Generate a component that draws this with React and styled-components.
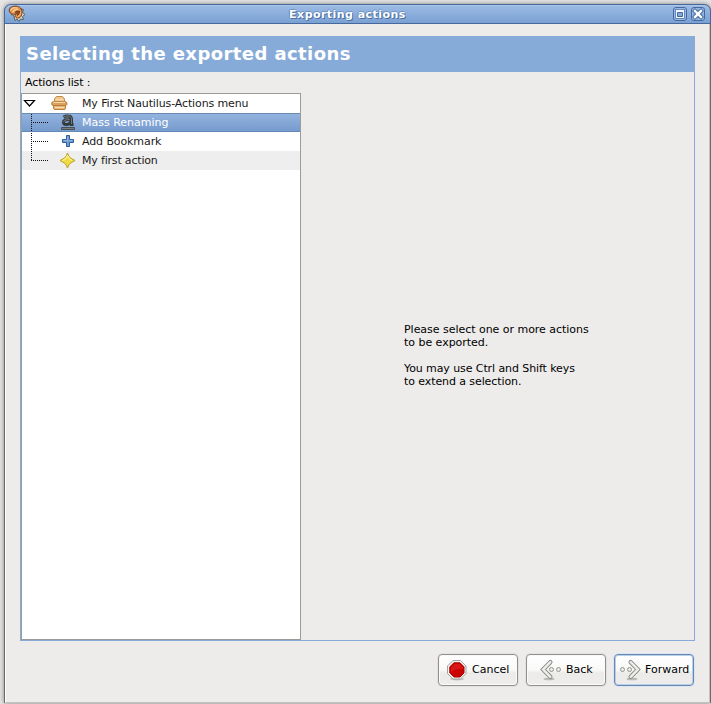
import React from "react";
import styled, { createGlobalStyle } from "styled-components";

const Global = createGlobalStyle`
  * { box-sizing: border-box; }
  body { margin: 0; overflow: hidden; background: #fff; }
`;

const Desktop = styled.div`
  width: 711px;
  height: 704px;
  padding: 4px 0 1px 4px;
  overflow: hidden;
  background: #e6e6e6;
  font: 11px/13px "DejaVu Sans", sans-serif;
  color: #000;
`;
const Window = styled.div`
  width: 707px;
  height: 699px;
  display: flex;
  flex-direction: column;
  border: 1px solid #6c6a68;
  border-top: 0;
  border-radius: 7px 7px 0 0;
  background: #edeceb;
  box-shadow: 0 0 5px rgba(0, 0, 0, 0.45);
`;
const TitleBar = styled.header`
  height: 20px;
  margin: 0 -1px;
  padding: 0 5px 0 3px;
  display: grid;
  grid-template-columns: 18px 1fr 32px;
  align-items: center;
  border: 1px solid #46689a;
  border-radius: 7px 7px 0 0;
  background: linear-gradient(#9dbce5, #7aa0d3);
  box-shadow: inset 0 1px #a9c5ea;
`;
const Title = styled.h1`
  margin: 0;
  padding: 1px 4px 0 0;
  text-align: center;
  font-size: 11px;
  line-height: 17px;
  letter-spacing: 0.46px;
  color: #fff;
  text-shadow: 1px 1px #49709f, -1px 0 #5f87bb, 0 -1px #6d94c7;
`;
const WindowControls = styled.div`
  display: flex;
  gap: 4px;
  svg { display: block; }
`;
const Body = styled.main`
  flex: 1;
  display: flex;
  flex-direction: column;
  padding: 12px 14px 16px 14px;
  border-left: 1px solid #fff;
  border-right: 1px solid #c5c2bf;
  border-bottom: 1px solid #c5c2bf;
`;
const Page = styled.section`
  height: 605px;
  display: flex;
  flex-direction: column;
  border: 1px solid #86abd9;
  border-top: 0;
`;
const Banner = styled.h2`
  height: 36px;
  margin: 0 -1px;
  padding-left: 6px;
  background: #86abd9;
  color: #fff;
  font-size: 18px;
  line-height: 35px;
  letter-spacing: 0.42px;
  white-space: nowrap;
`;
const Columns = styled.div`
  flex: 1;
  display: grid;
  grid-template-columns: 280px 1fr;
`;
const ListColumn = styled.div`
  display: flex;
  flex-direction: column;
`;
const ListLabel = styled.div`
  height: 21px;
  padding-left: 4px;
  line-height: 21px;
  letter-spacing: -0.12px;
`;
const Tree = styled.div`
  flex: 1;
  border: 1px solid #9d9b98;
  background: #fff;
`;
const Row = styled.div`
  height: 19px;
  display: grid;
  grid-template-columns: 60px 1fr;
  line-height: 19px;
  letter-spacing: ${(p) => p.$tracking || 0}px;
  white-space: nowrap;
  color: ${(p) => (p.$selected ? "#fff" : "#1a1a1a")};
  background: ${(p) =>
    p.$selected ? "linear-gradient(#95b5e0, #7499cc)" : p.$shaded ? "#eeeeee" : "#fff"};
  box-shadow: ${(p) => (p.$selected ? "inset 0 1px #6b8cb2, inset 0 -1px #6488b9" : "none")};
`;
const Gutter = styled.svg`
  display: block;
  width: 60px;
  height: 19px;
`;
const Message = styled.div`
  padding: 251px 0 0 103px;
  letter-spacing: -0.03px;
  white-space: nowrap;
  p { margin: 0 0 13px; }
  p + p { letter-spacing: -0.09px; }
`;
const Actions = styled.footer`
  margin: 13px 1px 0 0;
  display: flex;
  justify-content: flex-end;
  gap: 8px;
`;
const Button = styled.button`
  width: 80px;
  height: 32px;
  padding: 0 0 1px ${(p) => p.$inset || 0}px;
  display: flex;
  align-items: center;
  gap: 4px;
  border: 1px solid ${(p) => (p.$primary ? "#6688b4" : "#93918e")};
  border-radius: 4px;
  background: linear-gradient(#fff, #f9f9f8 50%, #ecebea 60%, #eeedec);
  box-shadow: inset 0 0 0 1px ${(p) => (p.$primary ? "#bccfe8" : "#f9f9f9")},
    0 0 0 1px ${(p) => (p.$primary ? "#dce5f0" : "#e3e1df")};
  font: inherit;
  color: #000;
  svg { display: block; flex: none; }
`;

const Shell = () => (
  <svg width="18" height="18" viewBox="0 0 18 18">
    <path d="M3 9 6 11 7 15.5 9 14 11 16.5 12.5 14 15.5 14.5 14.5 11.5 17 9.5 14.5 7.5 15.5 4.5 12.5 4Z" fill="#d9dcd3" stroke="#56605f" />
    <path d="M1.2 5C1.5 2 5 1 8 1.2C12 1.3 14.2 4 14 7.5C13.8 11 12 13.5 9.5 13C7 12.8 6.5 10.5 8 9C5 10 1 8.5 1.2 5Z" fill="#df9147" stroke="#743c19" />
    <path d="M2.5 5.5C4 2.5 7 2 10 3.2M4.5 7.5C6 4.5 8 4 10.5 5" fill="none" stroke="#ffd09a" strokeWidth="1.2" />
    <path d="M7 7.5Q9 5 11.5 6.5Q12 9 9.5 10.5" fill="#984c1d" stroke="#6d3518" />
    <path d="M12.7 7Q12.7 10.5 9.5 11.8" fill="none" stroke="#f4c18b" />
  </svg>
);

const ControlFrame = () => (
  <>
    <rect x=".5" y=".5" width="13" height="13" rx="2.5" fill="#83a7d8" stroke="#446a9d" />
    <rect x="1.5" y="1.5" width="11" height="11" rx="1.5" fill="none" stroke="#98b8e2" />
  </>
);
const MaximizeIcon = () => (
  <svg width="14" height="14">
    <ControlFrame />
    <rect x="2.5" y="2.5" width="9" height="9" fill="#f5f9ff" stroke="#6489bc" />
    <path d="M4.5 5.5H9.5V9.5H4.5Z" fill="#83a7d8" stroke="#446a9d" />
  </svg>
);
const CloseIcon = () => (
  <svg width="14" height="14">
    <ControlFrame />
    <path d="M4 4 10 10M10 4 4 10" stroke="#496f9f" strokeWidth="4.2" strokeLinecap="square" />
    <path d="M4 4 10 10M10 4 4 10" stroke="#fff" strokeWidth="2.3" strokeLinecap="square" />
  </svg>
);

const Basket = () => (
  <g>
    <path d="M31.5 11H43.5V14.5Q43.5 15.5 42 15.5H33Q31.5 15.5 31.5 14.5Z" fill="#e9b777" stroke="#ba8040" />
    <path d="M29.5 9.5Q29.5 8 31.5 7.5H43Q45.5 8 45 10.5Q44.5 11.5 43 11.5H31.5Q29.5 11.5 29.5 9.5Z" fill="#dba15c" stroke="#b97d3d" />
    <path d="M32.5 7.5V5L34.5 2.5H40.5L42.5 5V7.5Z" fill="#f0c88f" stroke="#c28a49" />
    <path d="M34 5.5H41M31.5 8.5H43M33 13.5H42" stroke="#f7d9ad" />
  </g>
);
const LetterA = () => (
  <g fill="none">
    <path d="M41.5 4Q43.5 2.8 46 3Q49.5 3 49.5 6.5V11.5H51.5M49 6.8H45Q41.5 7 41.5 9.3Q41.7 11.5 44.3 11.5Q48 11.5 49 8.8" stroke="#33393b" strokeWidth="3" />
    <path d="M41.5 3.7Q44 2.6 47 3Q49 3.5 49.5 5.5V11M48 6.7H45Q41.6 7 41.6 9.2" stroke="#747b7e" strokeWidth="1" />
    <path d="M39.5 14.5H52.5V16.5H39.5Z" fill="#777d7f" stroke="#484f53" />
  </g>
);
const Plus = () => (
  <g>
    <path d="M44.5 3.5H47.5V7.5H51.5V10.5H47.5V14.5H44.5V10.5H40.5V7.5H44.5Z" fill="#729fcf" stroke="#2f5d9c" strokeLinejoin="round" />
    <path d="M45.5 5V9M42 8.5H45.5M47 8.5H50" stroke="#92b6df" fill="none" />
  </g>
);
const Star = () => (
  <g>
    <path d="M45.5 2Q46.5 5.5 48.5 7L53 9.5 48.5 12Q46.5 13.5 45.5 17Q44.5 13.5 42.5 12L38 9.5 42.5 7Q44.5 5.5 45.5 2Z" fill="#f1dc47" stroke="#bda023" strokeLinejoin="round" />
    <path d="M45.5 4Q45 8 40.5 9.5M46 5Q46.5 8 50 9.5" fill="none" stroke="#fff8a8" />
  </g>
);
const Branch = ({ last }) => (
  <path d={`M9.5 ${last ? 0 : 1}V${last ? 10 : 19}M9 9.5H27`} fill="none" stroke="#111" strokeDasharray="1 1" />
);

const StopIcon = () => (
  <svg width="22" height="22" viewBox="0 0 22 22">
    <ellipse cx="11" cy="20" rx="7" ry="1.5" fill="#c3c2c0" />
    <path d="M7 1.5H14.5L20 7V14.5L14.5 20H7L1.5 14.5V7Z" fill="#f4f4f2" stroke="#a1a39e" />
    <path d="M8 3.8H14L18 7.8V14L14 18H8L3.8 14V7.8Z" fill="#cc0000" stroke="#a90000" />
    <path d="M5 8 8.5 5H13.5L17 8V10Q11 9 5 13Z" fill="#d91717" />
  </svg>
);
const Arrow = ({ flip }) => (
  <svg width="22" height="22" viewBox="0 0 22 22">
    <g transform={flip ? "translate(22 0) scale(-1 1)" : undefined}>
      <ellipse cx="9" cy="20" rx="5.5" ry="1.3" fill="#b9b9b5" />
      <path d="M10.3 3.2 3.2 10.5 10.3 17.8" fill="none" stroke="#878a84" strokeWidth="4.4" strokeLinecap="round" />
      <path d="M10.3 3.2 3.2 10.5 10.3 17.8" fill="none" stroke="#e5e5e2" strokeWidth="2.6" strokeLinecap="round" />
      <path d="M10 3 2.7 10.5 10 17.8" fill="none" stroke="#f8f8f6" strokeWidth=".9" />
      <circle cx="11.5" cy="10.5" r="2" fill="#eeeeec" stroke="#91938e" />
      <circle cx="18.5" cy="10.5" r="2" fill="#eeeeec" stroke="#91938e" />
    </g>
  </svg>
);

export default function App() {
  return (
    <Desktop>
      <Global />
      <Window>
        <TitleBar>
          <Shell />
          <Title>Exporting actions</Title>
          <WindowControls><MaximizeIcon /><CloseIcon /></WindowControls>
        </TitleBar>
        <Body>
          <Page>
            <Banner>Selecting the exported actions</Banner>
            <Columns>
              <ListColumn>
                <ListLabel>Actions list :</ListLabel>
                <Tree>
                  <Row $tracking={-0.12}>
                    <Gutter><path d="M2.5 6.5H12.5L7.5 12Z" fill="#fff" stroke="#000" strokeWidth="1.2" /><Basket /></Gutter>
                    My First Nautilus-Actions menu
                  </Row>
                  <Row $selected><Gutter><Branch /><LetterA /></Gutter>Mass Renaming</Row>
                  <Row $tracking={-0.1}><Gutter><Branch /><Plus /></Gutter>Add Bookmark</Row>
                  <Row $shaded $tracking={-0.18}><Gutter><Branch last /><Star /></Gutter>My first action</Row>
                </Tree>
              </ListColumn>
              <Message>
                <p>Please select one or more actions<br />to be exported.</p>
                <p>You may use Ctrl and Shift keys<br />to extend a selection.</p>
              </Message>
            </Columns>
          </Page>
          <Actions>
            <Button $inset={7}><StopIcon />Cancel</Button>
            <Button $inset={13}><Arrow />Back</Button>
            <Button $primary $inset={4}><Arrow flip />Forward</Button>
          </Actions>
        </Body>
      </Window>
    </Desktop>
  );
}
